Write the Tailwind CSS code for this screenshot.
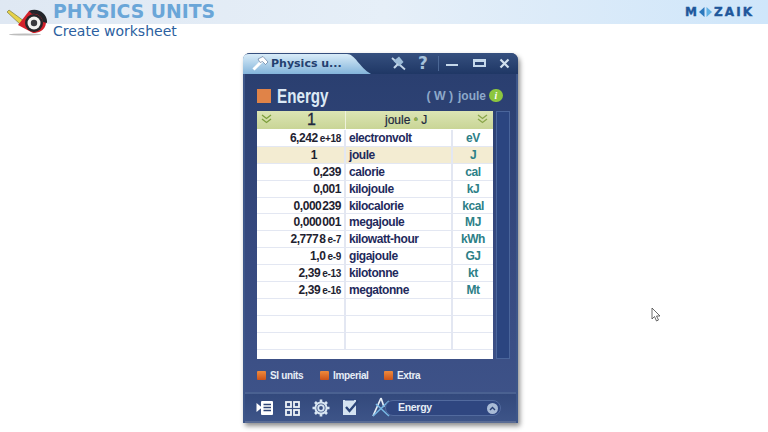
<!doctype html>
<html>

<head>
    <meta charset="UTF-8">
    <script src="https://cdn.jsdelivr.net/npm/@tailwindcss/browser@4"></script>
</head>

<body class="w-[768px] h-[432px] overflow-hidden bg-white relative font-['Liberation_Sans',sans-serif]">
    <!-- top banner -->
    <header class="h-6 bg-gradient-to-r from-[#dfe8f3] via-[#e6eff8] to-[#cfe6fa] relative">
        <svg class="absolute left-[5px] top-[8px] z-10" width="44" height="30" viewBox="0 0 44 30">
            <ellipse cx="20" cy="26.5" rx="16" ry="1" fill="#bdbdbd" />
            <path d="M2 4 L4 2 L19 13 L16 17 Z" fill="#e6d24a" stroke="#6b6b30" stroke-width="0.6" />
            <path d="M13 17 L24 3 C33 0 41 7 41 15 C40 23 33 25 28 25 Z" fill="#d3202a" />
            <path d="M24 3 C33 -1 43 6 42 15 L38 14 C37 8 32 5 27 6 Z" fill="#23252b" />
            <circle cx="29" cy="15" r="9" fill="#26262a" />
            <circle cx="29" cy="15" r="6.5" fill="#f2f2f0" />
            <circle cx="29" cy="15" r="3.2" fill="#3a3a3e" />
        </svg>
        <h1 class="absolute left-[53px] top-[2px] font-['DejaVu_Sans',sans-serif] font-bold text-[18.8px] leading-[20px] text-[#6aa6d8] whitespace-nowrap">PHYSICS UNITS</h1>
        <p class="absolute left-[53px] top-[22px] font-['DejaVu_Sans',sans-serif] text-[14px] leading-[18px] text-[#2c5fa0] whitespace-nowrap">Create worksheet</p>
        <div class="absolute left-[685px] top-[5px] flex items-center font-['DejaVu_Sans',sans-serif] font-bold text-[#20579b] text-[12px] leading-[14px] [-webkit-text-stroke:0.4px_#20579b]">
            <span>M</span>
            <svg class="mx-[1px]" width="15" height="10" viewBox="0 0 15 10"><path d="M6.5 0 L1 5 L6.5 10 Z" fill="#2c78bd" /><path d="M8.5 0 L14 5 L8.5 10 Z" fill="#5fb0e4" /></svg>
            <span class="tracking-[2.1px]">ZAIK</span>
        </div>
    </header>

    <!-- app window -->
    <main class="absolute left-[243px] top-[53px] w-[275px] h-[370px] rounded-t-[7px] bg-[#2f4577] shadow-[2px_3px_5px_rgba(0,0,0,0.45)] flex flex-col">
        <!-- title bar -->
        <div class="h-[21px] shrink-0 relative rounded-t-[7px] bg-gradient-to-b from-[#36507f] to-[#1f3765]">
            <svg class="absolute left-0 top-0" width="130" height="21" viewBox="0 0 130 21">
                <defs>
                    <linearGradient id="tab" x1="0" y1="0" x2="0" y2="1">
                        <stop offset="0" stop-color="#d9ecf8" />
                        <stop offset="1" stop-color="#83b4da" />
                    </linearGradient>
                </defs>
                <path d="M0 21 V6 Q0 1 6 1 H104 C112 1 116 14 128 21 Z" fill="url(#tab)" />
            </svg>
            <svg class="absolute left-[9px] top-[3px]" width="17" height="15" viewBox="0 0 17 15">
                <path d="M1.5 13.5 L10 5" stroke="#fff" stroke-width="3" />
                <path d="M6 3 L11 0.5 L16 6 L13.5 8.5 L10.5 5.5 L8 6.5 Z" fill="#fff" stroke="#31507f" stroke-width="0.5" />
            </svg>
            <span class="absolute left-[28px] top-[3px] font-['DejaVu_Sans',sans-serif] font-bold text-[11px] leading-[15px] text-[#23406f] whitespace-nowrap">Physics u...</span>
            <svg class="absolute left-[148px] top-[3px]" width="15" height="15" viewBox="0 0 15 15">
                <path d="M1 2 L14 13.5" stroke="#c4d6e8" stroke-width="1.8" />
                <path d="M2.5 5 L8 0.5 L12.5 6 L8 10.5 Z" fill="#9dbcd8" />
                <path d="M3 12 L7 8" stroke="#c4d6e8" stroke-width="2.2" />
            </svg>
            <span class="absolute left-[175px] top-[0px] font-['DejaVu_Sans',sans-serif] font-bold text-[17px] leading-[20px] text-[#a6c2dc]">?</span>
            <div class="absolute left-[195px] top-[3px] w-px h-[15px] bg-[#4b6795]"></div>
            <div class="absolute left-[203px] top-[11px] w-[12px] h-[2px] bg-[#c5d8ea]"></div>
            <div class="absolute left-[230px] top-[6px] w-[13px] h-[8px] border-2 border-t-[3px] border-[#c5d8ea]"></div>
            <svg class="absolute left-[256px] top-[5px]" width="11" height="11" viewBox="0 0 11 11"><path d="M1.5 1.5 L9.5 9.5 M9.5 1.5 L1.5 9.5" stroke="#d1e0ee" stroke-width="2.2" /></svg>
        </div>

        <!-- body -->
        <div class="flex-1 flex flex-col border-x-2 border-[#3d5689] bg-gradient-to-b from-[#2a3f70] via-[#36497f] to-[#3f548a]">
            <div class="h-[37px] shrink-0 flex items-center pl-3 pr-[13px] pt-[6px]">
                <div class="w-[14px] h-[14px] bg-[#e08348]"></div>
                <span class="ml-[6px] font-bold text-[20px] leading-[22px] text-[#dce9f5] scale-x-[0.76] origin-left">Energy</span>
                <span class="ml-auto text-[#8da8c9] text-[13px] leading-[16px] font-bold scale-x-[0.95] origin-right">( W )</span>
                <span class="ml-[5px] text-[#8da8c9] text-[12px] leading-[16px] font-bold">joule</span>
                <span class="ml-[3px] w-[14px] h-[13px] rounded-full bg-[#8cc63f] text-white italic font-bold text-[10px] leading-[13px] text-center font-['Liberation_Serif',serif]">i</span>
            </div>

            <div class="flex pl-3">
                <!-- unit table -->
                <div class="w-[236px] bg-white text-[12px] font-bold tracking-[-0.45px]">
                    <div class="h-[19px] grid grid-cols-[89px_107px_40px] bg-gradient-to-b from-[#dce5b4] to-[#c9d596] text-[#20283f] border-b border-white">
                        <div class="relative pl-[50px] text-[16px] leading-[18px] border-r border-[#eef1da] font-normal [-webkit-text-stroke:0.3px_#20283f]">
                            <svg class="absolute left-[4px] top-[3px]" width="11" height="10" viewBox="0 0 11 10" fill="none" stroke="#7c9e3c" stroke-width="1.3"><path d="M1 1 L5.5 4.5 L10 1 M1 5 L5.5 8.5 L10 5" /></svg>
                            1
                        </div>
                        <div class="col-span-2 relative pl-[39px] leading-[18px] font-normal tracking-normal [-webkit-text-stroke:0.2px_#20283f]">
                            joule <span class="text-[#8fb24a]">•</span> J
                            <svg class="absolute right-[5px] top-[3px]" width="11" height="10" viewBox="0 0 11 10" fill="none" stroke="#8aa64a" stroke-width="1.3"><path d="M1 1 L5.5 4.5 L10 1 M1 5 L5.5 8.5 L10 5" /></svg>
                        </div>
                    </div>
                    <div class="grid grid-cols-[89px_107px_40px] auto-rows-[16.9px] leading-[16px] [&>div]:border-b [&>div]:border-[#e3e7f2]">
                        <div class="pr-[3px] text-right text-[#1e2230] border-r-2 border-r-[#e3e7f2]">6,242<span class="text-[10px] ml-[2px] tracking-[-0.3px]">e+18</span></div><div class="pl-[3px] text-[#1f2a5c] border-r-2 border-r-[#e3e7f2]">electronvolt</div><div class="text-center text-[#2d8087]">eV</div>
                        <div class="pr-[27px] text-right bg-[#f3ecd2] text-[#1e2230] border-r-2 border-r-[#e8e4d2]">1</div><div class="pl-[3px] bg-[#f3ecd2] text-[#1f2a5c] border-r-2 border-r-[#e8e4d2]">joule</div><div class="text-center bg-[#f3ecd2] text-[#2d8087]">J</div>
                        <div class="pr-[3px] text-right text-[#1e2230] border-r-2 border-r-[#e3e7f2]">0,239</div><div class="pl-[3px] text-[#1f2a5c] border-r-2 border-r-[#e3e7f2]">calorie</div><div class="text-center text-[#2d8087]">cal</div>
                        <div class="pr-[3px] text-right text-[#1e2230] border-r-2 border-r-[#e3e7f2]">0,001</div><div class="pl-[3px] text-[#1f2a5c] border-r-2 border-r-[#e3e7f2]">kilojoule</div><div class="text-center text-[#2d8087]">kJ</div>
                        <div class="pr-[3px] text-right text-[#1e2230] border-r-2 border-r-[#e3e7f2]">0,000<span class="ml-[1px]">239</span></div><div class="pl-[3px] text-[#1f2a5c] border-r-2 border-r-[#e3e7f2]">kilocalorie</div><div class="text-center text-[#2d8087]">kcal</div>
                        <div class="pr-[3px] text-right text-[#1e2230] border-r-2 border-r-[#e3e7f2]">0,000<span class="ml-[1px]">001</span></div><div class="pl-[3px] text-[#1f2a5c] border-r-2 border-r-[#e3e7f2]">megajoule</div><div class="text-center text-[#2d8087]">MJ</div>
                        <div class="pr-[3px] text-right text-[#1e2230] border-r-2 border-r-[#e3e7f2]">2,777<span class="ml-[1px]">8</span><span class="text-[10px] ml-[2px] tracking-[-0.3px]">e-7</span></div><div class="pl-[3px] text-[#1f2a5c] border-r-2 border-r-[#e3e7f2]">kilowatt-hour</div><div class="text-center text-[#2d8087]">kWh</div>
                        <div class="pr-[3px] text-right text-[#1e2230] border-r-2 border-r-[#e3e7f2]">1,0<span class="text-[10px] ml-[2px] tracking-[-0.3px]">e-9</span></div><div class="pl-[3px] text-[#1f2a5c] border-r-2 border-r-[#e3e7f2]">gigajoule</div><div class="text-center text-[#2d8087]">GJ</div>
                        <div class="pr-[3px] text-right text-[#1e2230] border-r-2 border-r-[#e3e7f2]">2,39<span class="text-[10px] ml-[2px] tracking-[-0.3px]">e-13</span></div><div class="pl-[3px] text-[#1f2a5c] border-r-2 border-r-[#e3e7f2]">kilotonne</div><div class="text-center text-[#2d8087]">kt</div>
                        <div class="pr-[3px] text-right text-[#1e2230] border-r-2 border-r-[#e3e7f2]">2,39<span class="text-[10px] ml-[2px] tracking-[-0.3px]">e-16</span></div><div class="pl-[3px] text-[#1f2a5c] border-r-2 border-r-[#e3e7f2]">megatonne</div><div class="text-center text-[#2d8087]">Mt</div>
                        <div class="border-r-2 border-r-[#e3e7f2]"></div><div class="border-r-2 border-r-[#e3e7f2]"></div><div></div>
                        <div class="border-r-2 border-r-[#e3e7f2]"></div><div class="border-r-2 border-r-[#e3e7f2]"></div><div></div>
                        <div class="border-r-2 border-r-[#e3e7f2]"></div><div class="border-r-2 border-r-[#e3e7f2]"></div><div></div>
                    </div>
                </div>
                <!-- scroll track -->
                <div class="ml-[3px] w-[14px] h-[248px] bg-[#2b4580] border border-[#4a659b]"></div>
            </div>

            <!-- legend -->
            <div class="h-[33px] shrink-0 flex items-center pl-3 text-[10px] font-bold text-[#e6edf6] tracking-[-0.35px]">
                <span class="w-[9px] h-[9px] rounded-[1px] bg-gradient-to-b from-[#ef8a3c] to-[#cd5218]"></span>
                <span class="ml-[4px] w-[50px]">SI units</span>
                <span class="w-[9px] h-[9px] rounded-[1px] bg-gradient-to-b from-[#ef8a3c] to-[#cd5218]"></span>
                <span class="ml-[4px] w-[51px]">Imperial</span>
                <span class="w-[9px] h-[9px] rounded-[1px] bg-gradient-to-b from-[#ef8a3c] to-[#cd5218]"></span>
                <span class="ml-[4px]">Extra</span>
            </div>

            <!-- toolbar -->
            <div class="flex-1 relative border-t-2 border-[#4a6191] bg-gradient-to-b from-[#33497c] to-[#3d5488] border-b-2 border-b-[#5a6c94]">
                <svg class="absolute left-[11px] top-[6px]" width="18" height="16" viewBox="0 0 18 16"><rect x="5" y="1" width="12" height="14" rx="1" fill="#fff" /><path d="M7.5 4.5 H15 M7.5 7.5 H15 M7.5 10.5 H15" stroke="#2e4475" stroke-width="1.3" /><path d="M0.5 3 L6 7.5 L0.5 12 Z" fill="#fff" /></svg>
                <svg class="absolute left-[40px] top-[7px]" width="15" height="15" viewBox="0 0 15 15" fill="none" stroke="#eef3f8" stroke-width="1.8"><rect x="1" y="1" width="5" height="5" /><rect x="9" y="1" width="5" height="5" /><rect x="1" y="9" width="5" height="5" /><rect x="9" y="9" width="5" height="5" /></svg>
                <svg class="absolute left-[67px] top-[5px]" width="18" height="18" viewBox="0 0 18 18" fill="none" stroke="#d7e5f2"><circle cx="9" cy="9" r="2.8" stroke-width="1.8" /><circle cx="9" cy="9" r="5.6" stroke-width="2" /><path d="M9 0.5 V3.5 M9 14.5 V17.5 M0.5 9 H3.5 M14.5 9 H17.5 M3 3 L5 5 M13 13 L15 15 M3 15 L5 13 M13 5 L15 3" stroke-width="2.6" /></svg>
                <svg class="absolute left-[97px] top-[5px]" width="18" height="17" viewBox="0 0 18 17"><rect x="1" y="1" width="13" height="15" fill="#d4e3f1" /><path d="M3 1 H12" stroke="#27407a" stroke-width="1" /><path d="M4 8 L7.5 12 L16 2" fill="none" stroke="#2a4478" stroke-width="2.4" /></svg>
                <svg class="absolute left-[125px] top-[3px]" width="21" height="21" viewBox="0 0 21 21" fill="none" stroke-width="1.7"><path d="M11 1 L3 19 M11 1 L14 10" stroke="#e5edf5" /><path d="M3 19 L19 4 M6 7 L19 19" stroke="#76b6e3" /></svg>
                <div class="absolute left-[140px] top-[6px] w-[116px] h-[16px] rounded-full bg-[#2f4680] border border-[#526a9e] flex items-center pl-[12px] pr-[2px]">
                    <span class="font-bold text-[10.5px] tracking-[-0.3px] text-[#e6edf6]">Energy</span>
                    <span class="ml-auto w-[11px] h-[11px] rounded-full bg-[#a9bbd6] flex items-center justify-center">
                        <svg width="7" height="5" viewBox="0 0 7 5" fill="none" stroke="#2a4076" stroke-width="1.4"><path d="M1 4 L3.5 1.5 L6 4" /></svg>
                    </span>
                </div>
            </div>
        </div>
    </main>

    <!-- mouse pointer -->
    <svg class="absolute left-[651px] top-[307px]" width="11" height="15" viewBox="0 0 11 15"><path d="M1 1 V12 L3.5 9.5 L5.5 14 L7.5 13 L5.5 9 H9 Z" fill="#fff" stroke="#444" stroke-width="0.8" /></svg>
</body>

</html>
